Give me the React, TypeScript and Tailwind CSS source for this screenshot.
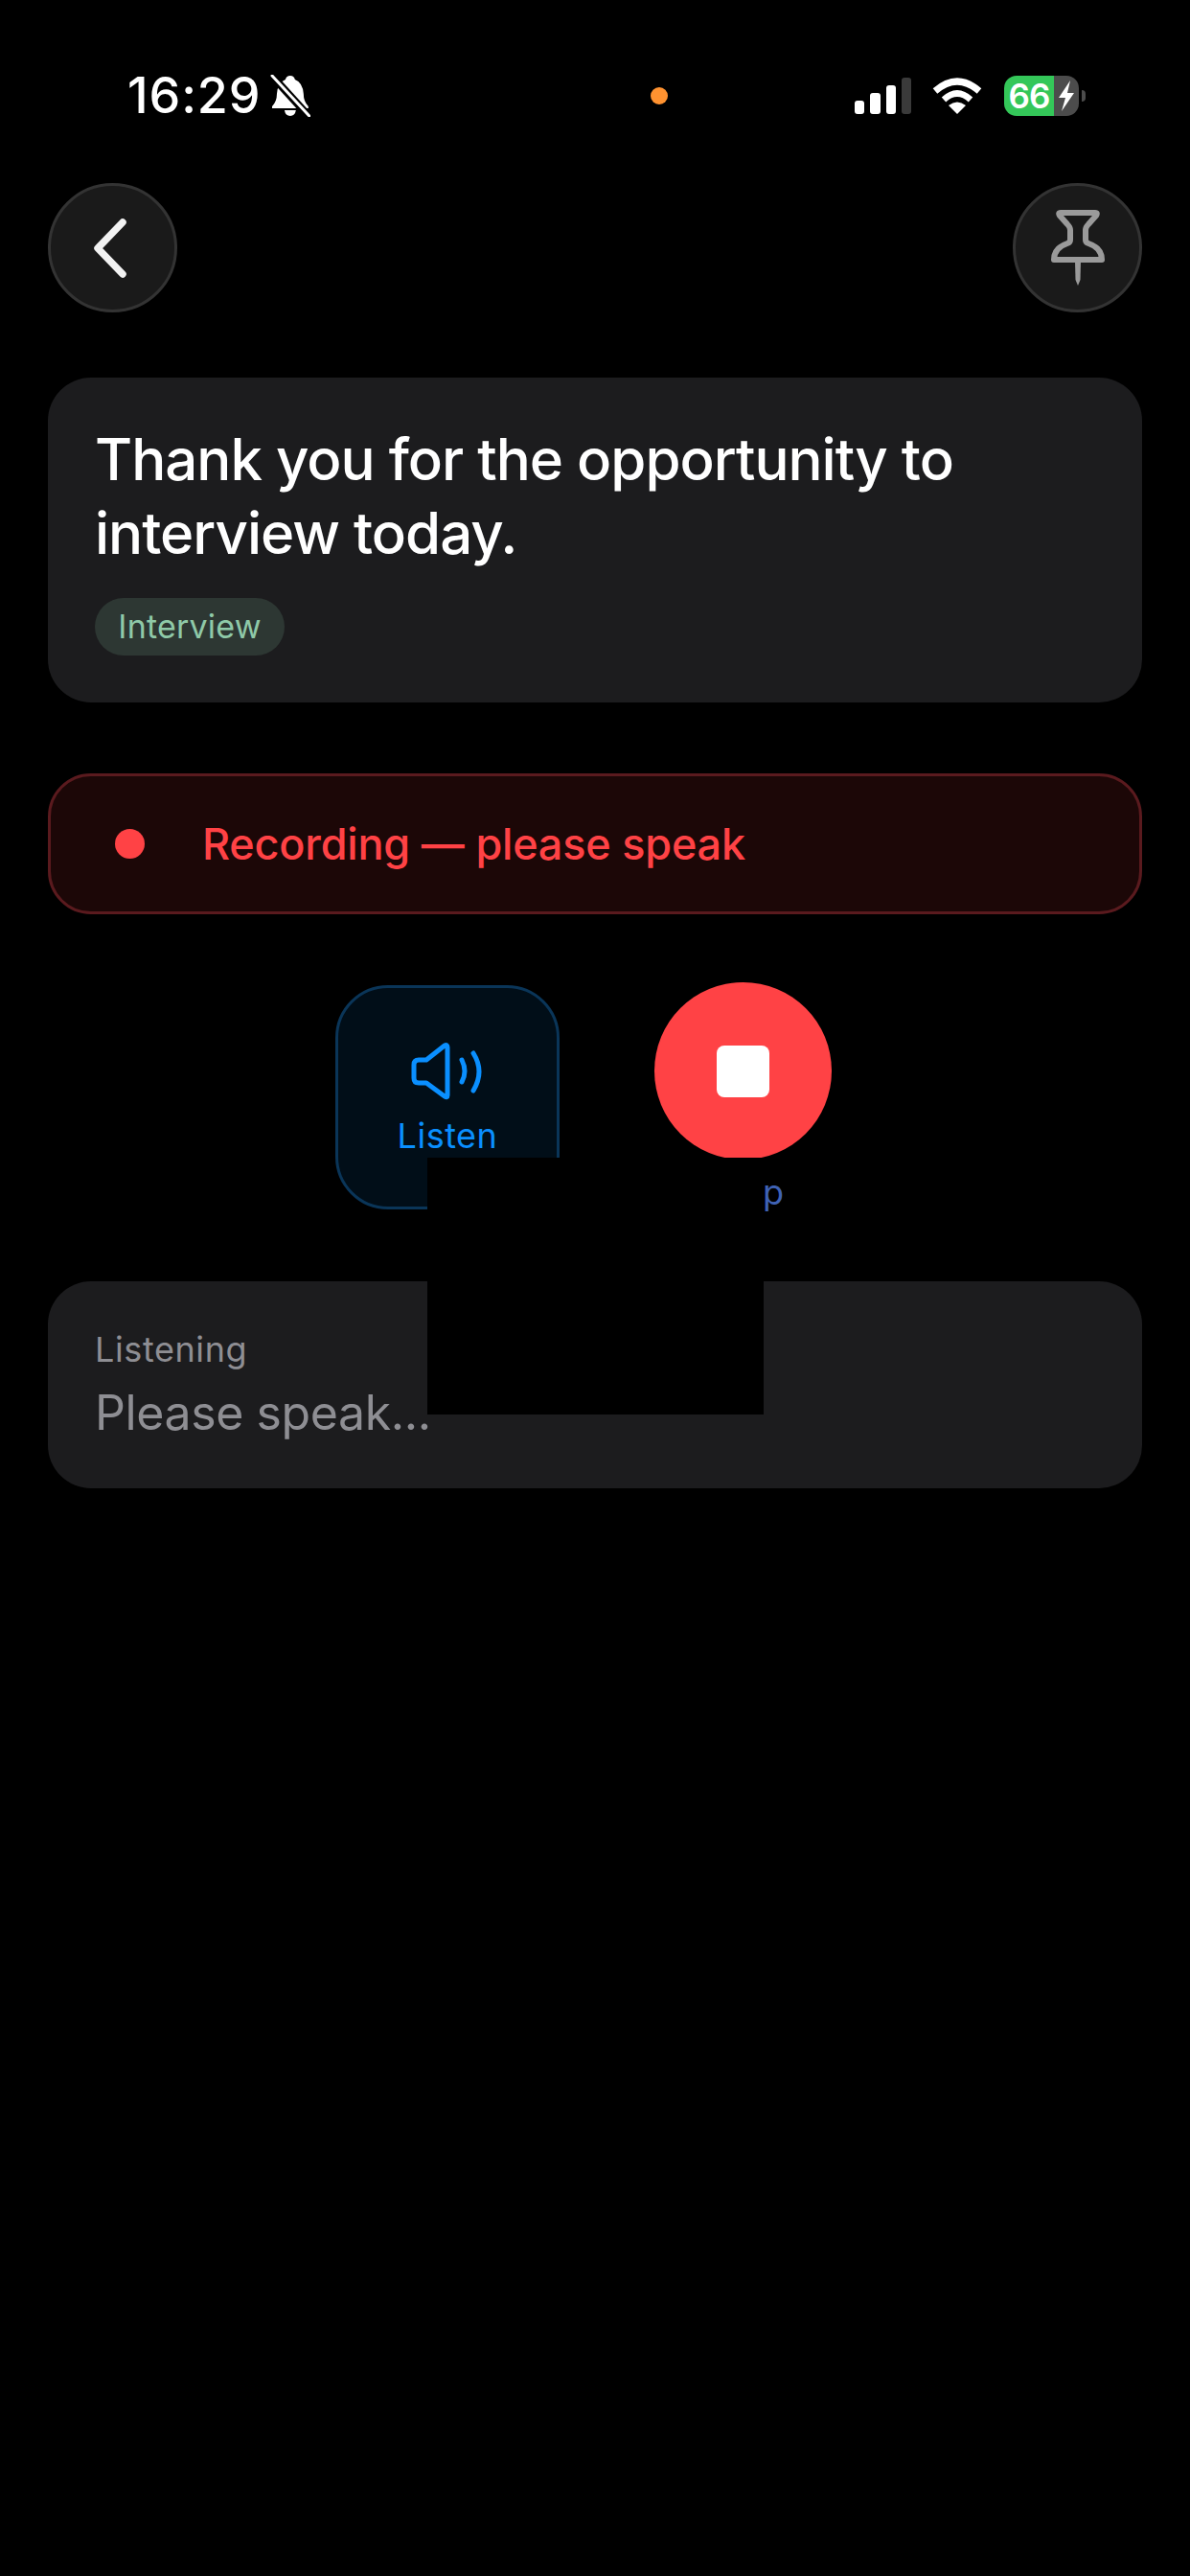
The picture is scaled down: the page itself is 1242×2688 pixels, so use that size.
export default function App() {
  return (
    <div className="relative w-[1242px] h-[2688px] bg-black font-[Inter,sans-serif] overflow-hidden">
      {/* status bar */}
      <div className="flex items-center h-[191px] pt-[9px]">
        <div className="flex items-center ml-[133px] w-[191px]">
          <span className="text-[52px] leading-[60px] font-medium tracking-[0.9px] text-white w-[150px]">16:29</span>
          <svg width="42" height="44" viewBox="0 0 42 44">
            <path fill="#fff" d="M21 1 Q25 1 26 5 Q34 8 35 20 Q35 28 40 33 V35 H2 V33 Q7 28 7 20 Q8 8 16 5 Q17 1 21 1 Z M15 37 H27 Q26 43 21 43 Q16 43 15 37 Z" />
            <path stroke="#000" strokeWidth="8" d="M1 0 L41 44" />
            <path stroke="#fff" strokeWidth="3" strokeLinecap="round" d="M2 1 L41 43" />
          </svg>
        </div>
        <div className="ml-[355px] w-[18px] h-[18px] rounded-full bg-[#ff9230]" />
        <div className="ml-[195px] flex items-end gap-[6px] h-[38px]">
          <div className="w-[10px] h-[14px] rounded-[3px] bg-white" />
          <div className="w-[11px] h-[22px] rounded-[3px] bg-white" />
          <div className="w-[10px] h-[30px] rounded-[3px] bg-white" />
          <div className="w-[10px] h-[38px] rounded-[3px] bg-[#3a3a3a]" />
        </div>
        <svg className="ml-[22px]" width="52" height="38" viewBox="0 0 52 38">
          <path fill="none" stroke="#fff" strokeWidth="7" d="M3 14 Q26 -6 49 14" />
          <path fill="none" stroke="#fff" strokeWidth="6.5" d="M12 23 Q26 10 40 23" />
          <path fill="#fff" d="M17 29 Q26 22 35 29 L26 38 Z" />
        </svg>
        <div className="ml-[23px] flex items-center">
          <div className="flex w-[78px] h-[42px] rounded-[13px] overflow-hidden">
            <div className="w-[52px] bg-[#34c759] flex items-center justify-center text-white text-[35px] leading-[42px] font-semibold tracking-[-1px]">66</div>
            <div className="w-[26px] bg-[#4c4c4c] flex items-center justify-center">
              <svg width="18" height="32" viewBox="0 0 18 32">
                <path fill="#fff" d="M13 0 L1 18 H8 L4 32 L17 13 H10 Z" />
              </svg>
            </div>
          </div>
          <div className="ml-[3px] w-[4px] h-[12px] rounded-r-[4px] bg-[#4c4c4c]" />
        </div>
      </div>

      <main className="flex flex-col px-[50px]">
        {/* nav */}
        <div className="flex justify-between">
          <button className="w-[135px] h-[135px] rounded-full bg-[#1a1a1a] border-[3px] border-[#333333] flex items-center justify-center">
            <svg width="40" height="64" viewBox="0 0 40 64" className="-translate-x-[2px]">
              <path fill="none" stroke="#f2f2f2" strokeWidth="7.5" strokeLinecap="round" strokeLinejoin="round" d="M32 5 L6 32 L32 59" />
            </svg>
          </button>
          <button className="w-[135px] h-[135px] rounded-full bg-[#1a1a1a] border-[3px] border-[#333333] flex items-center justify-center">
            <svg width="60" height="85" viewBox="0 0 60 85">
              <path fill="none" stroke="#9a9a9a" strokeWidth="6" strokeLinejoin="round" d="M12 6 H48 Q51 6 49 9 L41 18 Q38 21 38 24 V34 Q38 37 41 38 C50 41 55 47 55 55 H5 C5 47 10 41 19 38 Q22 37 22 34 V24 Q22 21 19 18 L11 9 Q9 6 12 6 Z" />
              <path fill="#9a9a9a" d="M27 56 L33 56 L32.5 76 L30 82 L27.5 76 Z" />
            </svg>
          </button>
        </div>

        {/* phrase card */}
        <section className="mt-[68px] rounded-[45px] bg-[#1c1c1e] pt-[47px] pb-[49px] px-[49px]">
          <p className="text-[60px] leading-[76.5px] tracking-[-1px] font-[450] text-white">Thank you for the opportunity to interview today.</p>
          <div className="mt-[30px] flex">
            <span className="h-[60px] w-[198px] rounded-full bg-[#2d3733] text-[#8fc9a8] text-[34px] leading-[60px] text-center tracking-[0.2px]">Interview</span>
          </div>
        </section>

        {/* recording */}
        <section className="mt-[74px] h-[147px] rounded-[45px] border-[3px] border-[#5a1a1e] bg-[#1c0707] flex items-center pl-[67px]">
          <div className="w-[31px] h-[31px] rounded-full bg-[#ff4245]" />
          <span className="ml-[60px] text-[45px] leading-[58px] font-[450] tracking-[-0.2px] text-[#ff4245]">Recording — please speak</span>
        </section>

        {/* controls */}
        <div className="mt-[71px] flex justify-center gap-[74px]">
          <button className="w-[234px] h-[234px] mt-[3px] rounded-[55px] border-[3px] border-[#0a3558] bg-[#010e18] flex flex-col items-center pt-[57px]">
            <svg width="78" height="60" viewBox="0 0 78 60">
              <path fill="none" stroke="#0a8fff" strokeWidth="5" strokeLinecap="round" strokeLinejoin="round" d="M9 18 H17 L36 3 Q39 1.5 39 5 V55 Q39 58 36 56 L17 42 H9 Q4 42 4 37 V23 Q4 18 9 18 Z M54 18 Q60 30 54 41 M66 11 Q78 30 66 50" />
            </svg>
            <span className="mt-[15px] text-[36px] leading-[44px] text-[#0a8fff] tracking-[0.5px]">Listen</span>
          </button>
          <div className="w-[234px] flex flex-col items-center">
            <button className="w-[185px] h-[185px] rounded-full bg-[#ff4245] flex items-center justify-center">
              <div className="w-[55px] h-[54px] rounded-[8px] bg-white" />
            </button>
            <span className="mt-[12px] ml-[8px] text-[36px] leading-[44px] text-[#3f62b5]">Stop</span>
          </div>
        </div>

        {/* transcript */}
        <section className="mt-[71px] rounded-[45px] bg-[#1c1c1e] pt-[49px] pb-[50px] px-[49px]">
          <div className="text-[36px] leading-[44px] tracking-[0.6px] text-[#8e8e93]">Listening</div>
          <div className="mt-[15px] text-[50px] leading-[58px] tracking-[-0.4px] text-[#8e8e93]">Please speak...</div>
        </section>
      </main>

      {/* redaction block over the content */}
      <div className="absolute left-[446px] top-[1208px] w-[351px] h-[268px] bg-black" />
    </div>
  );
}
